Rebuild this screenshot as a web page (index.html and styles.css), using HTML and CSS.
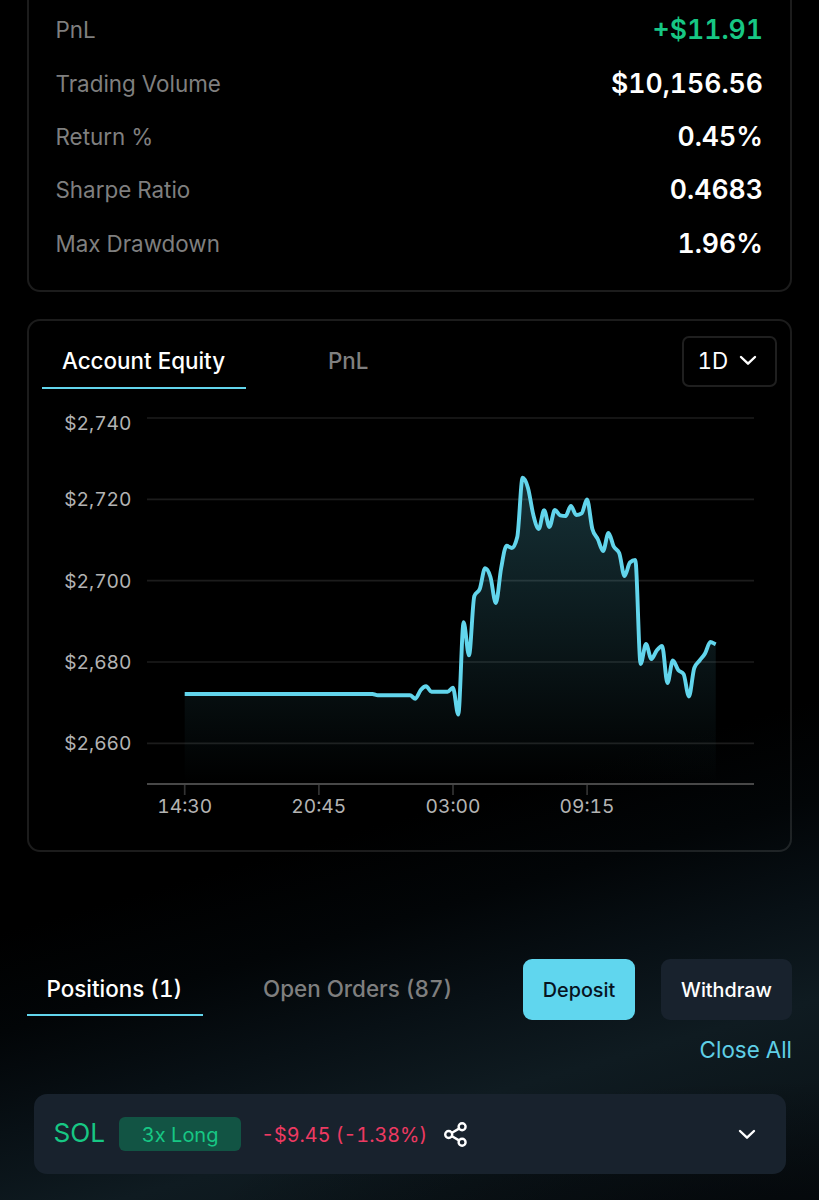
FILE: index.html
```html
<!DOCTYPE html>
<html lang="en">
<head>
<meta charset="utf-8">
<title>Account</title>
<link rel="stylesheet" href="styles.css">
</head>
<body>
<main class="page">
  <section class="card stats">
    <div class="stat"><span class="stat-label">PnL</span><span class="stat-value gain">+$11.91</span></div>
    <div class="stat"><span class="stat-label">Trading Volume</span><span class="stat-value">$10,156.56</span></div>
    <div class="stat"><span class="stat-label">Return %</span><span class="stat-value">0.45%</span></div>
    <div class="stat"><span class="stat-label">Sharpe Ratio</span><span class="stat-value">0.4683</span></div>
    <div class="stat"><span class="stat-label">Max Drawdown</span><span class="stat-value">1.96%</span></div>
  </section>

  <section class="card equity">
    <header class="equity-head">
      <nav class="tabs">
        <a class="tab active">Account Equity</a>
        <a class="tab tab-pnl">PnL</a>
      </nav>
      <button class="range">1D
        <svg class="chevron" width="20" height="12" viewBox="0 0 20 12"><path d="M3 2 10 8.7 17 2"/></svg>
      </button>
    </header>
    <svg class="chart" width="761" height="459" viewBox="29 389 761 459">
      <defs>
        <linearGradient id="fade" gradientUnits="userSpaceOnUse" x1="0" y1="478" x2="0" y2="783">
          <stop offset="0" stop-color="#5fd5ee" stop-opacity="0.23"/>
          <stop offset="1" stop-color="#5fd5ee" stop-opacity="0"/>
        </linearGradient>
      </defs>
      <path class="grid" d="M147 418H754M147 499.3H754M147 580.7H754M147 662H754M147 743.3H754"/>
      <path class="area" id="area" fill="url(#fade)"/>
      <path class="tick" d="M184.7 784V795M318.9 784V795M453 784V795M587.1 784V795"/>
      <path class="axis" d="M147 784H754"/>
      <path class="line" id="line"/>
      <g class="y-labels">
        <text x="131.5" y="430.3">$2,740</text>
        <text x="131.5" y="506.3">$2,720</text>
        <text x="131.5" y="587.7">$2,700</text>
        <text x="131.5" y="669">$2,680</text>
        <text x="131.5" y="750.4">$2,660</text>
      </g>
      <g class="x-labels">
        <text x="184.8" y="813.3">14:30</text>
        <text x="318.8" y="813.3">20:45</text>
        <text x="453" y="813.3">03:00</text>
        <text x="587" y="813.3">09:15</text>
      </g>
    </svg>
  </section>

  <section class="positions">
    <header class="positions-head">
      <nav class="tabs">
        <a class="tab active tab-positions">Positions (1)</a>
        <a class="tab tab-orders">Open Orders (87)</a>
      </nav>
      <button class="btn deposit">Deposit</button>
      <button class="btn withdraw">Withdraw</button>
    </header>
    <a class="close-all">Close All</a>
    <article class="position">
      <span class="symbol">SOL</span>
      <span class="badge">3x Long</span>
      <span class="loss">-$9.45 (-1.38%)</span>
      <svg class="share" width="24" height="28" viewBox="0 0 24 28">
        <circle cx="4.7" cy="14.5" r="3.5"/><circle cx="18.1" cy="6.8" r="3.5"/><circle cx="18.1" cy="22.2" r="3.5"/>
        <path d="M8 12.7 15 8.6M8 16.3 15 20.4"/>
      </svg>
      <svg class="chevron open" width="20" height="12" viewBox="0 0 20 12"><path d="M3 3 10 9.7 17 3"/></svg>
    </article>
  </section>
</main>
<script src="chart.js"></script>
</body>
</html>
```
FILE: styles.css
```css
* { box-sizing: border-box; }

body {
  margin: 0;
  background: #000;
  color: #fff;
  font-family: Inter, "Liberation Sans", sans-serif;
  font-size: 22.4px;
  font-variant-numeric: tabular-nums;
}

.page {
  height: 1200px;
  padding: 0 27px;
  overflow: hidden;
  display: flex;
  flex-direction: column;
  background:
    radial-gradient(ellipse 620px 150px at 819px 1230px, rgba(2, 4, 6, 0.8), transparent),
    linear-gradient(164deg, #000 65%, #020507 72%, #081015 79%, #0f1b21 86%, #0c161b 92%, #0a1116 99%);
}

.card {
  border: 2px solid rgba(255, 255, 255, 0.11);
  border-radius: 13px;
}

.stats {
  height: 292px;
  border-top: 0;
  border-radius: 0 0 13px 13px;
  padding: 3px 27px 0 26.5px;
}

.stat {
  height: 53.4px;
  display: flex;
  align-items: center;
  justify-content: space-between;
}

.stat-label { color: #7f7f7f; }
.stat-value { margin-top: -1px; font-size: 26.6px; font-weight: 600; }
.gain { color: #17c784; }

.equity { height: 533px; margin-top: 27px; }

.equity-head {
  height: 68px;
  padding: 14px 13px 0 13px;
  display: flex;
  justify-content: space-between;
}

.tabs { display: flex; }

.tab {
  color: #7f7f7f;
  font-weight: 500;
  white-space: nowrap;
}

.tab.active { color: #fff; border-bottom: 2px solid #62d5ec; }

.equity .tab { height: 54px; padding: 12px 20px 0; }
.equity .tab.active { width: 204px; }
.equity .tab-pnl { margin-left: 62px; }

button {
  font: inherit;
  font-variant-numeric: tabular-nums;
  color: #fff;
  background: none;
  border: 0;
  padding: 0;
}

.range {
  width: 95px;
  height: 51px;
  margin-top: 1px;
  padding: 0 0 2px 13.5px;
  border: 2px solid rgba(255, 255, 255, 0.12);
  border-radius: 7px;
  display: flex;
  align-items: center;
  gap: 10px;
}

.chevron path, .share {
  fill: none;
  stroke: #fff;
  stroke-width: 2.4;
  stroke-linecap: round;
  stroke-linejoin: round;
}

.chart { display: block; font-size: 19.2px; fill: #b3b3b3; }
.grid { stroke: #fff; stroke-opacity: 0.11; stroke-width: 1.7; fill: none; }
.axis { stroke: #484848; stroke-width: 1.8; }
.tick { stroke: #333; stroke-width: 1.7; }
.line { fill: none; stroke: #62d5ec; stroke-width: 3.9; stroke-linejoin: round; }
.y-labels { text-anchor: end; }
.x-labels { text-anchor: middle; }

.positions { margin-top: 107px; display: flex; flex-direction: column; }
.positions-head { height: 61px; display: flex; }
.positions .tab { height: 57px; padding: 16px 19.5px 0; }
.positions .tab.active { width: 176px; }
.positions .tab-orders { margin-left: 40.5px; }

.btn {
  height: 61px;
  border-radius: 9px;
  font-size: 19.8px;
  font-weight: 500;
}

.deposit { width: 112px; margin-left: auto; background: #60d6ee; color: #07131f; }
.withdraw { width: 131px; margin-left: 26px; background: #18222d; }

.close-all {
  align-self: flex-end;
  margin-top: 16px;
  line-height: 28px;
  color: #5fcfe6;
}

.position {
  height: 80px;
  margin: 30px 6px 0 6.5px;
  padding: 0 29px 0 20px;
  border-radius: 13px;
  background: #18222d;
  display: flex;
  align-items: center;
}

.symbol { margin-top: -3px; color: #17c784; font-size: 26.2px; }

.badge {
  width: 122px;
  height: 34px;
  margin-left: 14px;
  border-radius: 6px;
  background: #125444;
  color: #17c784;
  font-size: 20px;
  line-height: 36px;
  text-align: center;
}

.loss { margin: 2px 0 0 20px; color: #ed3a62; font-size: 19.8px; }
.share { margin-left: 17px; }
.open { margin-left: auto; }
```
FILE: chart.js
```js
// Plot-space heights, one sample every 15 minutes.
const ys = [
  ...Array(36).fill(694), ...Array(7).fill(695.3),
  698.7, 690, 686.3, 691.7, 691.7, 691.7, 691.7, 687.7, 714.5, 622.3, 655.3,
  596, 589, 568.3, 577, 603, 568, 545.8, 548, 537, 477.8, 488, 515, 529,
  510.3, 527, 510, 515.3, 516, 506, 515, 513.3, 499.5, 529, 539, 551, 533,
  546.7, 553, 576, 562.5, 560, 664, 644, 659, 650.5, 646, 683, 660.5, 670,
  674, 696.5, 668, 660.5, 653.5, 642, 644.3
];
const step = 5.364;
const pts = ys.map((y, i) => [184.7 + step * i, y]);

// Monotone cubic interpolation.
const slopes = ys.slice(1).map((y, i) => (y - ys[i]) / step);
const tangents = ys.map((_, i) => {
  if (i === 0) return slopes[0];
  if (i === ys.length - 1) return slopes[i - 1];
  const a = slopes[i - 1], b = slopes[i];
  return (Math.sign(a) + Math.sign(b)) * Math.min(Math.abs(a), Math.abs(b), 0.25 * Math.abs(a + b)) || 0;
});
let d = `M${pts[0]}`;
for (let i = 1; i < pts.length; i++) {
  const [x0, y0] = pts[i - 1], [x1, y1] = pts[i], h = step / 3;
  d += `C${x0 + h},${y0 + h * tangents[i - 1]},${x1 - h},${y1 - h * tangents[i]},${x1},${y1}`;
}
document.getElementById("line").setAttribute("d", d);
document.getElementById("area").setAttribute("d", `${d}V783H184.7Z`);
```
